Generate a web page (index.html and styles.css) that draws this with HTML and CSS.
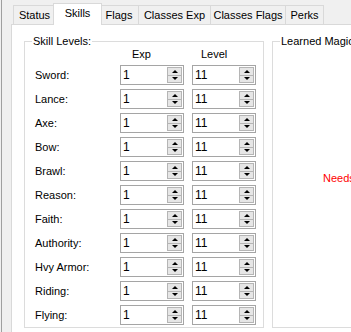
FILE: index.html
```html
<!DOCTYPE html>
<html lang="en">
<head>
    <meta charset="UTF-8">
    <title>Character Editor</title>
    <link rel="stylesheet" href="styles.css">
</head>
<body>
    <div class="window">
        <div class="tabs">
            <div class="tab tab-status">Status</div>
            <div class="tab tab-skills active">Skills</div>
            <div class="tab tab-flags">Flags</div>
            <div class="tab tab-cexp">Classes Exp</div>
            <div class="tab tab-cflags">Classes Flags</div>
            <div class="tab tab-perks">Perks</div>
        </div>
        <div class="page">
            <fieldset class="group skills">
                <legend>Skill Levels:</legend>
                <div class="grid">
                    <div></div>
                    <div class="head head-exp">Exp</div>
                    <div class="head head-level">Level</div>

                    <label>Sword:</label>
                    <div class="num"><span>1</span><div class="spin"><i class="up"></i><i class="down"></i></div></div>
                    <div class="num"><span>11</span><div class="spin"><i class="up"></i><i class="down"></i></div></div>

                    <label>Lance:</label>
                    <div class="num"><span>1</span><div class="spin"><i class="up"></i><i class="down"></i></div></div>
                    <div class="num"><span>11</span><div class="spin"><i class="up"></i><i class="down"></i></div></div>

                    <label>Axe:</label>
                    <div class="num"><span>1</span><div class="spin"><i class="up"></i><i class="down"></i></div></div>
                    <div class="num"><span>11</span><div class="spin"><i class="up"></i><i class="down"></i></div></div>

                    <label>Bow:</label>
                    <div class="num"><span>1</span><div class="spin"><i class="up"></i><i class="down"></i></div></div>
                    <div class="num"><span>11</span><div class="spin"><i class="up"></i><i class="down"></i></div></div>

                    <label>Brawl:</label>
                    <div class="num"><span>1</span><div class="spin"><i class="up"></i><i class="down"></i></div></div>
                    <div class="num"><span>11</span><div class="spin"><i class="up"></i><i class="down"></i></div></div>

                    <label>Reason:</label>
                    <div class="num"><span>1</span><div class="spin"><i class="up"></i><i class="down"></i></div></div>
                    <div class="num"><span>11</span><div class="spin"><i class="up"></i><i class="down"></i></div></div>

                    <label>Faith:</label>
                    <div class="num"><span>1</span><div class="spin"><i class="up"></i><i class="down"></i></div></div>
                    <div class="num"><span>11</span><div class="spin"><i class="up"></i><i class="down"></i></div></div>

                    <label>Authority:</label>
                    <div class="num"><span>1</span><div class="spin"><i class="up"></i><i class="down"></i></div></div>
                    <div class="num"><span>11</span><div class="spin"><i class="up"></i><i class="down"></i></div></div>

                    <label>Hvy Armor:</label>
                    <div class="num"><span>1</span><div class="spin"><i class="up"></i><i class="down"></i></div></div>
                    <div class="num"><span>11</span><div class="spin"><i class="up"></i><i class="down"></i></div></div>

                    <label>Riding:</label>
                    <div class="num"><span>1</span><div class="spin"><i class="up"></i><i class="down"></i></div></div>
                    <div class="num"><span>11</span><div class="spin"><i class="up"></i><i class="down"></i></div></div>

                    <label>Flying:</label>
                    <div class="num"><span>1</span><div class="spin"><i class="up"></i><i class="down"></i></div></div>
                    <div class="num"><span>11</span><div class="spin"><i class="up"></i><i class="down"></i></div></div>
                </div>
            </fieldset>
            <fieldset class="group magic">
                <legend>Learned Magic</legend>
                <div class="needs">Needs Class Data</div>
            </fieldset>
        </div>
    </div>
</body>
</html>
```

FILE: styles.css
```css
body {
    margin: 0;
    background: #f0f0f0;
    font-family: "Liberation Sans", Arial, sans-serif;
    font-size: 11px;
    color: #000;
    overflow: hidden;
}
.window {
    height: 332px;
    margin-left: 1px;
    border-left: 1px solid #a0a0a0;
    padding: 3px 0 0 9px;
    box-sizing: border-box;
    display: flex;
    flex-direction: column;
}
.tabs {
    display: flex;
    align-items: flex-end;
    height: 21px;
    padding-left: 2px;
}
.tab {
    height: 18px;
    line-height: 18px;
    box-sizing: border-box;
    height: 19px;
    text-align: center;
    border: 1px solid #d9d9d9;
    border-bottom: none;
    margin-right: -1px;
    white-space: nowrap;
}
.tab-status { width: 43px; }
.tab-skills { width: 45px; }
.tab-flags { width: 40px; }
.tab-cexp { width: 73px; }
.tab-cflags { width: 76px; }
.tab-perks { width: 39px; }
.tab.active {
    width: 49px;
    height: 22px;
    line-height: 19px;
    margin: 0 -3px -1px -2px;
    background: #fff;
    position: relative;
    z-index: 1;
}
.page {
    flex: 1;
    width: 400px;
    background: #fff;
    border-top: 1px solid #d9d9d9;
    border-left: 1px solid #d9d9d9;
    display: flex;
    gap: 8px;
    padding: 10px 0 0 12px;
}
.group {
    margin: 0;
    padding: 0;
    min-width: 0;
    border: 1px solid #dcdcdc;
    height: 293px;
    box-sizing: border-box;
}
.group legend {
    padding: 0 1px;
    margin-left: 7px;
    line-height: 12px;
}
.skills {
    width: 240px;
    flex: none;
}
.magic {
    width: 120px;
    flex: none;
}
.grid {
    display: grid;
    grid-template-columns: 77px 64px 64px;
    grid-template-rows: 14px;
    grid-auto-rows: 20px;
    column-gap: 8px;
    row-gap: 4px;
    padding: 0 0 0 10px;
}
.head {
    line-height: 14px;
}
.head-exp {
    padding-left: 12px;
}
.head-level {
    padding-left: 9px;
}
label {
    align-self: center;
}
.num {
    border: 1px solid #a5a5a5;
    display: flex;
    align-items: center;
    justify-content: space-between;
    box-sizing: border-box;
    font-size: 12px;
    padding: 1px 1px 1px 2px;
}
.spin {
    width: 15px;
    height: 16px;
    display: flex;
    flex-direction: column;
}
.spin i {
    flex: 1;
    background: #e6e6e6;
    border: 1px solid #b5b5b5;
    display: flex;
    align-items: center;
    justify-content: center;
}
.spin i + i {
    border-top: none;
}
.up::after {
    content: "";
    border-left: 3px solid transparent;
    border-right: 3px solid transparent;
    border-bottom: 3px solid #000;
}
.down::after {
    content: "";
    border-left: 3px solid transparent;
    border-right: 3px solid transparent;
    border-top: 3px solid #000;
}
.needs {
    color: #ff0000;
    padding: 125px 0 0 50px;
    white-space: nowrap;
}
```
